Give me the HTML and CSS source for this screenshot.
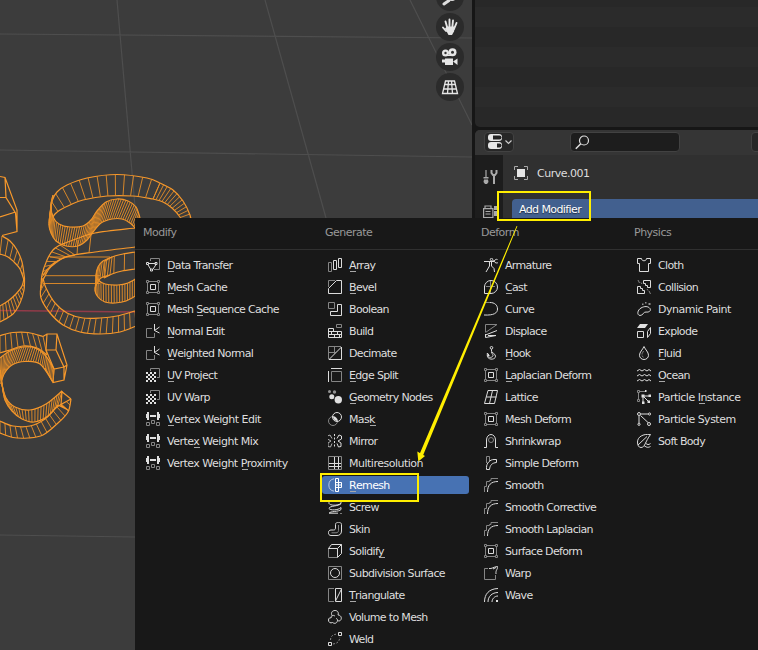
FILE: index.html
```html
<!DOCTYPE html>
<html lang="en">
<head>
<meta charset="utf-8">
<title>Add Modifier</title>
<link rel="stylesheet" href="styles.css">
</head>
<body>
<svg class="defs" width="0" height="0">
  <symbol id="transfer" viewBox="0 0 14 14"><path class="b" d="M4.5 3V.5h9v11H8"/><path class="a" d="M2.5 5.5h7M1.8 6.5l3 5M10 6.5l-3.2 5"/><path class="a" d="M.5 4.5h2v2h-2zM9 4.5h2v2H9zM4.500 11h2v2h-2z"/></symbol>
  <symbol id="lattice-box" viewBox="0 0 14 14"><path class="b" d="M3 1.500h8M3 12.500h8M1.500 3v8M12.500 3v8M.5.5h2v2h-2zM11.500.5h2v2h-2zM.5 11.500h2v2h-2zM11.500 11.500h2v2h-2z"/><path class="a" d="M4.500 4.500h5v5h-5z"/></symbol>
  <symbol id="normal" viewBox="0 0 14 14"><path class="b" d="M6 4.500H.5v9h8V9"/><path class="a" d="M8.500 0v6.500L13.500 3M8.500 6.500l5 2.500"/></symbol>
  <symbol id="uv" viewBox="0 0 14 14"><path class="b" d="M4.500 3V.5h9v9H11"/><path class="f" d="M0 4h2v2H0zM4 4h2v2H4zM8 4h2v2H8zM2 6h2v2H2zM6 6h2v2H6zM0 8h2v2H0zM4 8h2v2H4zM8 8h2v2H8zM2 10h2v2H2zM6 10h2v2H6zM0 12h2v2H0zM4 12h2v2H4zM8 12h2v2H8z"/></symbol>
  <symbol id="weight" viewBox="0 0 14 14"><path class="f" d="M0 2h1v4H0zM1 0h2v8H1zM11 0h2v8h-2zM13 2h1v4h-1zM4 3h6v2H4z"/><path class="b" d="M.5 10.500h3v3h-3zM5.500 8.500h3v3h-3zM10.500 10.500h3v3h-3z"/></symbol>
  <symbol id="array" viewBox="0 0 14 14"><path class="b" d="M.5 4.500h3v9h-3z"/><path class="a" d="M5.500 2.500h3v9h-3zM10.500.5h3v9h-3z"/></symbol>
  <symbol id="bevel" viewBox="0 0 14 14"><path class="b" d="M.5 7V.5H7"/><path class="a" d="M.5 13.500V8.500l8-8h5v13z"/></symbol>
  <symbol id="boolean" viewBox="0 0 14 14"><path class="b" d="M.5.5h6v6h-6z"/><path class="a" d="M9.500 2.500h4v11h-11v-4h7z"/></symbol>
  <symbol id="build" viewBox="0 0 14 14"><path class="b" d="M8.500.5h5v3h-5z"/><path class="a" d="M5.500 4.500h-5v9h13v-6H.5M.5 10.500h13M5.500 4.500v3M3.500 7.500v3M9.500 7.500v3M6.500 10.500v3M11.500 10.500v3"/></symbol>
  <symbol id="decimate" viewBox="0 0 14 14"><path class="b" d="M.5 13V.5H13M.5 6.500h7M6.500.5v7"/><path class="a" d="M1 13.500L13.500 1v12.500z"/></symbol>
  <symbol id="edge" viewBox="0 0 14 14"><path class="a" d="M3 .5h11M.5 3v11"/><path class="b" d="M3.500 3.500h10v10h-10z"/></symbol>
  <symbol id="geo" viewBox="0 0 14 14"><g class="dim"><circle cx="1.500" cy="1.500" r="1.500"/><circle cx="6.500" cy="2" r="1.700"/></g><g class="f"><circle cx="3.800" cy="6.700" r="2.500"/><circle cx="10.300" cy="9.700" r="3.700"/></g></symbol>
  <symbol id="mask" viewBox="0 0 14 14"><circle class="b" cx="5" cy="9" r="4.500"/><circle class="a" cx="9" cy="5" r="4.500"/><path class="f" d="M5 4.500A4.500 4.500 0 0 1 9.500 9 4.500 4.500 0 0 1 5 4.500z"/></symbol>
  <symbol id="mirror" viewBox="0 0 14 14"><path class="a dash" d="M6.500 0v14"/><path class="a" d="M9 4.500l2-3.500 2.500 1v3L10 7l3 2v3.500L10.500 13 9 9.500"/><path class="b lit" d="M4 4.500L2 1-.5 2v3L3 7 0 9v3.500l2.500.5L4 9.500"/></symbol>
  <symbol id="multires" viewBox="0 0 14 14"><path class="b" d="M.5.5h13v13H.5z"/><path class="a" d="M6.500 1v12M10.500 1v12M1 7.500h12M1 10.500h12"/></symbol>
  <symbol id="remesh" viewBox="0 0 14 14"><path class="b lite" d="M6 .8A6.300 6.300 0 0 0 6 13.200"/><path class="w" d="M7.500.5h3v13h-3zM7.500 4.500h6v5h-6M10.500 7h3M7.500 7h3"/></symbol>
  <symbol id="screw" viewBox="0 0 14 14"><path class="a" d="M11 .8C7-.8 0 .5 1 3.500c1 2 8 2.500 12 0C11 6.500 1 5.500 1 8.500c1 2 9 2 12-1v2C11 12 2 11 1 13.200M1 13.200h9M13 3.500v-2M13 13v1"/></symbol>
  <symbol id="skin" viewBox="0 0 14 14"><path class="a" d="M7.500 2.500c0-3 6-3 6 0V9c0 3-2 4.500-4.500 4.500H3c-3.500 0-3.500-5.500 0-5.500h2.500c1.500 0 2-.8 2-2z"/><path class="b" d="M10.500 3v5.500c0 1.500-1 2.300-2.500 2.300H3.500"/></symbol>
  <symbol id="solidify" viewBox="0 0 14 14"><path class="b" d="M.5 4v9.500H9"/><path class="a" d="M.5 4.500l3-4h10v9l-4 4v-9zM9.500 4.500l4-4"/></symbol>
  <symbol id="subdiv" viewBox="0 0 14 14"><path class="b" d="M.5.5h13v13H.5z"/><circle class="a" cx="7" cy="7" r="4.500"/></symbol>
  <symbol id="tri" viewBox="0 0 14 14"><path class="b" d="M6 .5H.5v13H6"/><path class="a" d="M7.500.5h6v13h-6zM7.500 13l6-12"/></symbol>
  <symbol id="volume" viewBox="0 0 14 14"><path class="a" d="M4 5.500C2.500 2.500 4.500.5 7 .5s4 2 3 4.500c2.500 0 4 2.500 3 4.500s-2.500 1.500-3.500 1c-.5 3-3 3.500-5 2C2.500 13.500.500 12.500.5 10c0-2 1.500-2.500 2.500-2 0-1 .5-2 1-2.500M4 6c1-.8 2-.8 3 .2M9.500 10.500c.2-1-.5-2-1.500-2"/></symbol>
  <symbol id="weld" viewBox="0 0 14 14"><path class="a" d="M10.500.5h3v3h-3zM.5 10.500h3v3h-3z"/><path class="b dash" d="M2.500 8C2.500 4.500 4.500 2.500 9 2M5 12c4.500-.5 6.500-2.500 6.800-7"/></symbol>
  <symbol id="armature" viewBox="0 0 14 14"><circle class="a" cx="7.500" cy="1.500" r="1.200"/><path class="a" d="M0 3.500h10.500M10.500 3.500L9.500 2M10.500 3.500c0 1.500 3 2 3.500 1M10.500 3c0-1.500 2-2 3-1.500M7.500 4v4M5.500 4v4l-3.500 6M7.500 8l2.500 2.500 .5 3.500"/></symbol>
  <symbol id="cast" viewBox="0 0 14 14"><path class="a" d="M.5 6v7.500H7a6.500 6.500 0 1 0-6.500-6.500"/><path class="b" d="M2 6.500h9M6.500 1v12"/></symbol>
  <symbol id="curve" viewBox="0 0 14 14"><path class="b" d="M0 .5h6"/><path class="a" d="M6 .5c4.500 0 7.500 2.500 7.500 6.500S10 13.500 0 13"/></symbol>
  <symbol id="displace" viewBox="0 0 14 14"><path class="b" d="M1.500 8V.5H13L1.500 8.500"/><path class="a" d="M13 6.500L1.500 11M1.500 10v3.500L12 11.500H4"/></symbol>
  <symbol id="hook" viewBox="0 0 14 14"><circle class="a" cx="7.500" cy="1.800" r="1.300"/><path class="a" d="M7.500 3.200v2c0 1.500 4 2.500 4 5 0 4-8 4-8.200-.5V7l2 2.500H3.500c1 3 5.500 2 5.500 0 0-1.500-1.500-2-1.500-3.500"/></symbol>
  <symbol id="lattice" viewBox="0 0 14 14"><path class="a" d="M4 .5h9.500L10.500 13.500H.5zM8.500.5l-3 13M2.500 7h10"/></symbol>
  <symbol id="shrink" viewBox="0 0 14 14"><path class="a" d="M0 13.500h2.500V6C2.500 3 4.500.5 7 .5S11.500 3 11.500 6v7.500H14"/><circle class="b" cx="7" cy="6" r="2.500"/></symbol>
  <symbol id="simple" viewBox="0 0 14 14"><path class="b" d="M2.500 7V.5h3v5"/><path class="a" d="M2.500 13.500v-2C2.500 7 6 3.500 10 3.500h2.500v3C8 7 6 9 5.500 13.500z"/></symbol>
  <symbol id="smooth" viewBox="0 0 14 14"><path class="b" d="M.5 14V8.500H2.500v-5h3v-1h1.500V.5H14"/><path class="a" d="M3.500 14C3.500 7 7 3.500 14 3.500"/></symbol>
  <symbol id="warp" viewBox="0 0 14 14"><path class="b" d="M4 2.500H.5v11h11V9"/><path class="a" d="M5 2.500c3 .5 4-1.500 8.500-2 .5 3-2 3-1.500 7.500M9 3l3-1.500"/></symbol>
  <symbol id="wave" viewBox="0 0 14 14"><path class="a" d="M.5 14C.5 6 5 .8 14 .5M4 14c0-5.500 4-9.500 10-9.500M8 14c0-3 2.500-6 6-6"/><path class="f" d="M12 12h2v2h-2z"/></symbol>
  <symbol id="cloth" viewBox="0 0 14 14"><path class="a" d="M.5.5h4c0 3 5 3 5 0h4v5h-2v8h-9v-8h-2z"/></symbol>
  <symbol id="collision" viewBox="0 0 14 14"><path class="a" d="M6.500.5h7v7h-3v-2h-2v-2h-2zM.5 6.500h3v2h2v2h2v3h-7z"/><path class="b" d="M1 0l1.500 3M4 2.500l1 1.500M10 9l1 1.500M12 11l1.500 3"/></symbol>
  <symbol id="paint" viewBox="0 0 14 14"><path class="a" d="M3 13.500C-.5 13 .5 8 4 6s7-2 9 .5c1.500 2.500-1.500 4-4 3.500-2.500-.3-3 3.500-6 3.500z"/><path class="dim" d="M5 1.500h1.500V3H5zM8 0h1.500v1.500H8zM11.500 1h2v2h-2z"/></symbol>
  <symbol id="explode" viewBox="0 0 14 14"><path class="f" d="M3 0h8L8 4H0z"/><path class="a" d="M.5 7.500h6v6h-6zM10.500 7.500l3-4v6l-3 4z"/></symbol>
  <symbol id="fluid" viewBox="0 0 14 14"><path class="a" d="M7 .5C5.500 4 2.500 6 2.500 9.300a4.500 4.200 0 0 0 9 0C11.500 6 8.500 4 7 .5z"/><path class="b" d="M5 8.500c0-1.500 1-2 1.500-3.500M5 9.500c.2 1 .8 1.500 1.500 1.700"/></symbol>
  <symbol id="ocean" viewBox="0 0 14 14"><path class="a" d="M0 3l2.500-1.500L5 3l2.500-1.500L10 3l2-1.500L14 3M0 8l2.500-1.500L5 8l2.500-1.500L10 8l2-1.500L14 8M0 13l2.500-1.500L5 13l2.500-1.500L10 13l2-1.500L14 13"/></symbol>
  <symbol id="pinst" viewBox="0 0 14 14"><path class="b" d="M.5.5h2v2h-2zM3 1.500h5M1.500 3v6M.5 9.500h2v2h-2z"/><path class="a" d="M6 6h6M6 6v6M6 6l5 5"/><path class="f" d="M4.500 4.500h3v3h-3zM11.500 4.500h2.500V7h-2.500zM10.500 10.500H13V13h-2.500zM5 11.500h2.500V14H5zM8 0h1.500v2H8z"/></symbol>
  <symbol id="psys" viewBox="0 0 14 14"><path class="a" d="M4 2h7M2 4v7M3.500 3.500l7.500 7"/><g class="a"><circle cx="2" cy="2" r="1.500"/><circle cx="12.500" cy="2" r="1.100"/><circle cx="2" cy="12.300" r="1.100"/><circle cx="12" cy="12" r="1.500"/></g></symbol>
  <symbol id="soft" viewBox="0 0 14 14"><path class="a" d="M13.500.5C6-.5.500 3 .5 8c0 3 1 5.500 3.500 5.500C8 13.500 8 8 13.500.5z"/><path class="a" d="M1 11l9-8.500M8.500 9c2 2 3 2 5 .5M7 11.500c3 2.500 4.500 2 6.500 1"/></symbol>
</svg>

<main class="screen">
  <section class="viewport">
    <svg class="scene" width="472" height="650" viewBox="0 0 472 650">
      <g class="floor">
        <path d="M0 34L472 38M0 150L472 157M0 535L135 537M117 0L136 218M265 0L326 218M410 0L472 125"/>
      </g>
      <path class="axis" d="M0 310.500L136 312"/>
      <g id="wire" class="wire"></g>
    </svg>
    <nav class="gizmos">
      <span class="gizmo"><svg width="18" height="18" viewBox="0 0 18 18"><circle cx="11" cy="8" r="5" fill="#ddd"/><path d="M8 12.500l-5 3.500" stroke="#ddd" stroke-width="3" stroke-linecap="round"/></svg></span>
      <span class="gizmo"><svg width="18" height="18" viewBox="0 0 18 18"><path d="M2 9.500L5 13M4.500 3.500l2 7M8.500 1.500v8M12 2.500l-.8 8M15.500 5l-2.500 6" stroke="#e6e6e6" stroke-width="1.900" stroke-linecap="round"/><path d="M4 10.500l2-2h8l-1 5-2 3.500H7.500z" fill="#e6e6e6"/></svg></span>
      <span class="gizmo"><svg width="18" height="18" viewBox="0 0 18 18"><g fill="#e6e6e6"><circle cx="4.500" cy="5" r="3.500"/><circle cx="11.500" cy="4.200" r="4"/><path d="M4 7h9v1H4zM4 10.500h8v6.500H4zM1 11.500h3v3H1zM12 13.500l4.500-3v6.500z"/></g><g fill="#303030"><circle cx="4.500" cy="5" r="1.200"/><circle cx="11.500" cy="4.200" r="1.500"/></g></svg></span>
      <span class="gizmo"><svg width="18" height="18" viewBox="0 0 18 18"><path d="M4.500 3h9l3 12.500h-15zM3.500 6.500h11M2.500 11h13M7.500 3l-1 12.500M10.500 3l1 12.500" fill="none" stroke="#e6e6e6" stroke-width="1.300"/></svg></span>
    </nav>
  </section>

  <aside class="side">
    <div class="outliner"></div>
    <div class="props">
      <div class="props-head">
        <span class="editor"><svg width="24" height="16" viewBox="0 0 24 16"><rect width="14" height="7" y="0" rx="3" fill="#e6e6e6"/><path d="M5 1.500h6.500a2 2 0 0 1 0 4H5z" fill="#222"/><rect width="14" height="7" y="8" rx="3" fill="#e6e6e6"/><path d="M9 9.500h2.500a2 2 0 0 1 0 4H9z" fill="#222"/><path d="M17.500 6.500l3 3 3-3" fill="none" stroke="#ccc" stroke-width="1.200"/></svg></span>
        <span class="search"><svg width="15" height="15" viewBox="0 0 15 15"><circle cx="9" cy="5.500" r="4.500" fill="none" stroke="#ddd" stroke-width="1.200"/><path d="M5.800 8.800L.8 13.800" stroke="#ddd" stroke-width="1.500"/></svg></span>
        <span class="more"></span>
      </div>
      <div class="props-body">
        <div class="tabs">
          <svg width="15" height="15" viewBox="0 0 15 15"><path d="M3 0v7" stroke="#aaa" stroke-width="1.200"/><path d="M.5 7h5v1.500h-5zM1 9.500h4L5.500 12 4 14H2L.5 12z" fill="#aaa"/><path d="M8.500 0v3l1.500 2h2l1.500-2V0M11 5v9" stroke="#aaa" stroke-width="2" fill="none"/></svg>
          <svg width="15" height="13" viewBox="0 0 15 13"><path d="M.6 3.600h9.300v9H.6zM2 3V1h6v2M2.500 6.500h5M2.500 9h5" fill="none" stroke="#aaa" stroke-width="1.200"/><path d="M11 1h4v4h-4zM11 6h4v5h-4z" fill="#aaa"/></svg>
        </div>
        <div class="content">
          <div class="object"><svg width="14" height="14" viewBox="0 0 14 14"><path d="M.5 4V.5H4M10 .5h3.500V4M13.500 10v3.500H10M4 13.500H.5V10" fill="none" stroke="#aaa"/><path d="M3 3h8v8H3z" fill="#e6e6e6"/></svg><span>Curve.001</span><svg class="pin" width="6" height="14" viewBox="0 0 6 14"><path d="M6 1L1.500 4.500 6 8M4 8L0 12.500" fill="none" stroke="#888"/></svg></div>
          <div class="add">Add Modifier</div>
        </div>
      </div>
    </div>
  </aside>

  <div class="menu">
    <section class="col modify">
      <h2>Modify</h2>
      <ul>
        <li><svg><use href="#transfer"/></svg><span><u>D</u>ata Transfer</span></li>
        <li><svg><use href="#lattice-box"/></svg><span><u>M</u>esh Cache</span></li>
        <li><svg><use href="#lattice-box"/></svg><span>Mesh <u>S</u>equence Cache</span></li>
        <li><svg><use href="#normal"/></svg><span><u>N</u>ormal Edit</span></li>
        <li><svg><use href="#normal"/></svg><span><u>W</u>eighted Normal</span></li>
        <li><svg><use href="#uv"/></svg><span><u>U</u>V Project</span></li>
        <li><svg><use href="#uv"/></svg><span>UV Warp</span></li>
        <li class="loose"><svg><use href="#weight"/></svg><span><u>V</u>ertex Weight Edit</span></li>
        <li class="loose"><svg><use href="#weight"/></svg><span>Verte<u>x</u> Weight Mix</span></li>
        <li class="loose"><svg><use href="#weight"/></svg><span>Vertex Weight <u>P</u>roximity</span></li>
      </ul>
    </section>
    <section class="col generate">
      <h2>Generate</h2>
      <ul>
        <li><svg><use href="#array"/></svg><span><u>A</u>rray</span></li>
        <li><svg><use href="#bevel"/></svg><span><u>B</u>evel</span></li>
        <li><svg><use href="#boolean"/></svg><span>Boolean</span></li>
        <li><svg><use href="#build"/></svg><span>Build</span></li>
        <li><svg><use href="#decimate"/></svg><span>Decimate</span></li>
        <li><svg><use href="#edge"/></svg><span><u>E</u>dge Split</span></li>
        <li><svg><use href="#geo"/></svg><span><u>G</u>eometry Nodes</span></li>
        <li><svg><use href="#mask"/></svg><span>Mas<u>k</u></span></li>
        <li><svg><use href="#mirror"/></svg><span>Mirror</span></li>
        <li class="loose"><svg><use href="#multires"/></svg><span>Multiresolution</span></li>
        <li class="active"><svg><use href="#remesh"/></svg><span><u>R</u>emesh</span></li>
        <li><svg><use href="#screw"/></svg><span>Screw</span></li>
        <li><svg><use href="#skin"/></svg><span>Skin</span></li>
        <li><svg><use href="#solidify"/></svg><span>Solidif<u>y</u></span></li>
        <li><svg><use href="#subdiv"/></svg><span>Subdivision Surface</span></li>
        <li><svg><use href="#tri"/></svg><span><u>T</u>riangulate</span></li>
        <li><svg><use href="#volume"/></svg><span>Volume to Mesh</span></li>
        <li><svg><use href="#weld"/></svg><span>Weld</span></li>
      </ul>
    </section>
    <section class="col deform">
      <h2>Deform</h2>
      <ul>
        <li><svg><use href="#armature"/></svg><span>Armature</span></li>
        <li><svg><use href="#cast"/></svg><span><u>C</u>ast</span></li>
        <li><svg><use href="#curve"/></svg><span>Curve</span></li>
        <li><svg><use href="#displace"/></svg><span>Displace</span></li>
        <li><svg><use href="#hook"/></svg><span><u>H</u>ook</span></li>
        <li><svg><use href="#lattice-box"/></svg><span><u>L</u>aplacian Deform</span></li>
        <li><svg><use href="#lattice"/></svg><span>Lattice</span></li>
        <li><svg><use href="#lattice-box"/></svg><span>Mesh Deform</span></li>
        <li><svg><use href="#shrink"/></svg><span>Shrinkwrap</span></li>
        <li><svg><use href="#simple"/></svg><span>Simple Deform</span></li>
        <li><svg><use href="#smooth"/></svg><span>Smooth</span></li>
        <li><svg><use href="#smooth"/></svg><span>Smooth Corrective</span></li>
        <li><svg><use href="#smooth"/></svg><span>Smooth Laplacian</span></li>
        <li><svg><use href="#lattice-box"/></svg><span>Surface Deform</span></li>
        <li><svg><use href="#warp"/></svg><span>Warp</span></li>
        <li><svg><use href="#wave"/></svg><span>Wave</span></li>
      </ul>
    </section>
    <section class="col physics">
      <h2>Physics</h2>
      <ul>
        <li><svg><use href="#cloth"/></svg><span>Cloth</span></li>
        <li><svg><use href="#collision"/></svg><span>Collision</span></li>
        <li class="loose"><svg><use href="#paint"/></svg><span>Dynamic Paint</span></li>
        <li><svg><use href="#explode"/></svg><span>Explode</span></li>
        <li><svg><use href="#fluid"/></svg><span><u>F</u>luid</span></li>
        <li><svg><use href="#ocean"/></svg><span><u>O</u>cean</span></li>
        <li class="loose"><svg><use href="#pinst"/></svg><span>Particle <u>I</u>nstance</span></li>
        <li class="loose"><svg><use href="#psys"/></svg><span>Particle System</span></li>
        <li><svg><use href="#soft"/></svg><span>Soft Body</span></li>
      </ul>
    </section>
  </div>

  <svg class="notes" width="758" height="650" viewBox="0 0 758 650">
    <path class="frame" d="M498 192h92v28h-92zM321 474h97v27h-97z"/>
    <path class="arrow" d="M516.600 226L517.400 226.300L422.800 456L419.400 454.600zM418.300 461.500L417.300 451.500L425 456z"/>
  </svg>
</main>
<script src="wire.js"></script>
</body>
</html>
```
FILE: styles.css
```css
* { box-sizing: border-box; }
body {
  margin: 0;
  background: #161616;
  color: #dedede;
  font: 11px/22px "DejaVu Sans", sans-serif;
  letter-spacing: -0.66px;
  overflow: hidden;
}
.defs { position: absolute; }
.screen {
  position: relative;
  display: flex;
  gap: 3px;
  width: 758px;
  height: 650px;
  overflow: hidden;
}
.viewport { position: relative; width: 472px; background: #3c3c3c; }
.scene { display: block; }
.floor path { stroke: #4e4e4e; stroke-width: 1.2; fill: none; }
.axis { stroke: #913b49; stroke-width: 1.3; }
.wire path { fill: none; stroke: #f7982b; stroke-width: 1.2; }
.wire .rib { stroke: #e88f27; stroke-width: .9; }
.gizmos {
  position: absolute;
  top: -17px;
  right: 8px;
  display: flex;
  flex-direction: column;
  gap: 2px;
}
.gizmo {
  display: grid;
  place-items: center;
  width: 28px;
  height: 28px;
  border-radius: 50%;
  background: #2b2b2b;
}
.side { flex: 1; display: flex; flex-direction: column; gap: 3px; }
.outliner {
  height: 127px;
  border-radius: 0 0 0 5px;
  background: repeating-linear-gradient(#282828 0 7px, #2b2b2b 7px 27px, #282828 27px 40px);
}
.props {
  flex: 1;
  display: flex;
  flex-direction: column;
  border-radius: 5px 0 0 0;
  background: #303030;
  overflow: hidden;
}
.props-head {
  display: flex;
  align-items: center;
  height: 25px;
  padding: 0 0 1px 9px;
  background: #353535;
}
.editor, .search, .more {
  display: flex;
  align-items: center;
  height: 20px;
  border: 1px solid #424242;
  border-radius: 4px;
  background: #272727;
}
.editor { width: 30px; padding-left: 3px; }
.search { width: 110px; margin-left: 56px; padding-left: 4px; background: #1d1d1d; }
.more { width: 20px; margin-left: 71px; flex: none; }
.props-body { flex: 1; display: flex; }
.tabs {
  width: 28px;
  padding: 15px 0 0 8px;
  background: #1d1d1d;
  display: flex;
  flex-direction: column;
  gap: 20px;
}
.content { flex: 1; padding: 7px 0 0 9px; }
.object { display: flex; align-items: center; gap: 9px; padding-left: 2px; letter-spacing: -.5px; }
.object span { padding-top: 2px; line-height: 20px; }
.pin { margin-left: auto; }
.add {
  height: 22px;
  margin-top: 15px;
  padding-left: 7px;
  border-radius: 4px 0 0 0;
  background: #42608f;
  color: #fff;
  line-height: 21px;
  letter-spacing: -.6px;
  text-shadow: 0 1px 1px #0008;
}
.menu {
  position: absolute;
  left: 135px;
  top: 218px;
  right: 0;
  bottom: 0;
  display: grid;
  grid-template-columns: 186px 156px 153px 1fr;
  background: #181818;
}
.col h2 {
  height: 32px;
  margin: 0;
  padding: 4px 0 0 8px;
  border-bottom: 1px solid #303030;
  color: #989898;
  font-size: inherit;
  font-weight: 400;
  letter-spacing: -.5px;
}
.col:not(.modify) h2 { padding-left: 4px; }
.col ul { margin: 0; padding: 4px 0 0; list-style: none; }
.col li {
  display: flex;
  align-items: center;
  gap: 7px;
  height: 22px;
  padding-left: 7px;
  white-space: nowrap;
}
.col li span { padding-top: 2px; line-height: 20px; }
.modify li { padding-left: 11px; }
.col li.loose { letter-spacing: -.5px; }
.col li svg { width: 14px; height: 14px; flex: none; overflow: visible; }
.col li.active {
  height: 18px;
  margin: 2px 8px 2px 1px;
  padding-left: 6px;
  border-radius: 3px;
  background: #4772b3;
  color: #fff;
}
u { position: relative; text-decoration: none; }
u::after {
  content: "";
  position: absolute;
  left: 1px;
  top: 12px;
  width: 6px;
  height: 1px;
  background: #a8a8a8;
}
.a { fill: none; stroke: #dcdcdc; }
.b { fill: none; stroke: #858585; }
.w { fill: none; stroke: #fff; }
.lite { stroke: #b4c4e0; }
.lit { stroke: #b0b0b0; }
.f { fill: #e0e0e0; }
.dim { fill: #929292; }
.dash { stroke-dasharray: 2 1.5; }
.notes { position: absolute; left: 0; top: 0; }
.frame { fill: none; stroke: #ffee00; stroke-width: 2; }
.arrow { fill: #ffee00; }
```
FILE: wire.js
```js
// Wireframe of the extruded text: each band joins two edge curves with ribs.
const wire = document.getElementById('wire');
const add = (d, cls) => {
  const p = document.createElementNS('http://www.w3.org/2000/svg', 'path');
  p.setAttribute('d', d);
  if (cls) p.setAttribute('class', cls);
  wire.appendChild(p);
  return p;
};
const curve = pts => {
  let d = `M${pts[0]}`;
  for (let i = 0; i < pts.length - 1; i++) {
    const p0 = pts[i - 1] || pts[i], p1 = pts[i], p2 = pts[i + 1], p3 = pts[i + 2] || p2;
    d += `C${p1[0] + (p2[0] - p0[0]) / 6} ${p1[1] + (p2[1] - p0[1]) / 6} ${p2[0] - (p3[0] - p1[0]) / 6} ${p2[1] - (p3[1] - p1[1]) / 6} ${p2}`;
  }
  return add(d);
};
const band = (a, b, n) => {
  const ca = curve(a), cb = curve(b), la = ca.getTotalLength(), lb = cb.getTotalLength();
  let d = '';
  for (let i = 0; i <= n; i++) {
    const p = ca.getPointAtLength(la * i / n), q = cb.getPointAtLength(lb * i / n);
    d += `M${p.x} ${p.y}L${q.x} ${q.y}`;
  }
  add(d, 'rib');
};

// Left glyph
add('M0 176.500L5 177.500L17 210V231.500L2 235.500M5 177.500L6 197.500L15.500 213L17 231.500M0 197.500H6M0 217L15.500 212');
band([[2,236],[10,241],[17,250],[22,262],[24.500,278]], [[0,254],[8,257],[15,263],[20,269],[24,280]], 7);
band([[24,278],[22,286],[16,294],[8,301],[0,306]], [[24.500,278],[24,290],[20,303],[13,314],[0,322]], 12);

// Large glyph, top bow
band([[51,211],[52,201],[57,192],[67,185],[87,178],[117,174.500],[147,178],[160,183]], [[53,217],[55,214],[60,210],[70,205],[83,200],[107,196],[133,196],[153,199]], 14);
band([[160,183],[173,190],[183,201],[190,215],[192,226]], [[153,199],[163,202],[172,208],[180,217],[184,226]], 14);
band([[53,195],[51,205],[53,217],[59,224],[70,227],[83,226],[91,220],[97,211],[106,202],[117,199],[128,201],[136,207],[140,218]], [[50,214],[49,225],[51,233],[56,241],[66,246],[78,246],[87,240],[93,232],[101,223],[112,219],[122,219],[130,223],[137,230]], 56);

// Large glyph, middle and lower bow
curve([[60,245],[76,239],[95,233],[135,228]]);
curve([[43,275],[54,263],[70,256],[95,252],[135,247]]);
add('M50 257H110M45 275.700H100M43 283.500H100M91 235L89 253M78 240L77 255', 'rib');
band([[60,245],[53,250],[47,260],[42,275],[41,288]], [[75,255],[65,257],[57,262],[49,269],[43,280]], 9);
band([[43,278],[46,288],[55,303],[67,313],[83,318],[100,318],[117,316],[135,311]], [[41,285],[41,298],[50,313],[63,325],[80,332],[100,334],[120,332],[136,326]], 20);

// Counter of the large glyph
band([[135,252],[123,254],[112,257],[105,261]], [[135,269],[122,271],[112,274],[104,278]], 3);
band([[112,257],[103,261],[98,267],[96,276],[98,280],[105,284],[118,285],[128,283],[137,278]], [[110,275],[103,277],[99,280],[95,289],[98,297],[105,302],[115,303],[126,301],[137,295]], 27);

// Small glyph
band([[0,335.500],[13,332.500],[28,332.500],[43,336.500]], [[0,353],[10,350],[23,346],[37,348],[47,355]], 8);
add('M43 336.500L47 334H57L67 365L64 380L53 382.500L45 368M47 334L46 350H56L57 334M56 350L64 367L67 365M64 367L54 369L46 350M64 367V380M54 369L53 382');
band([[0,358],[10,351],[23,347],[35,348],[45,355],[54,369]], [[1,384],[4,374],[12,365],[25,361.500],[40,364],[53,382]], 30);
band([[0,370],[2,384],[6,398],[15,407],[30,410],[46,404],[62,391]], [[2,384],[5,400],[12,411],[22,419],[34,422],[48,416],[58,405]], 29);
band([[0,421],[13,426],[30,426],[45,419],[57,407],[71,399]], [[0,433],[13,437.500],[28,438],[43,435],[58,423],[68,412],[71,399]], 15);
add('M62 391L61 405L69 411M61 391L71 399M58 405L66 409');
```
